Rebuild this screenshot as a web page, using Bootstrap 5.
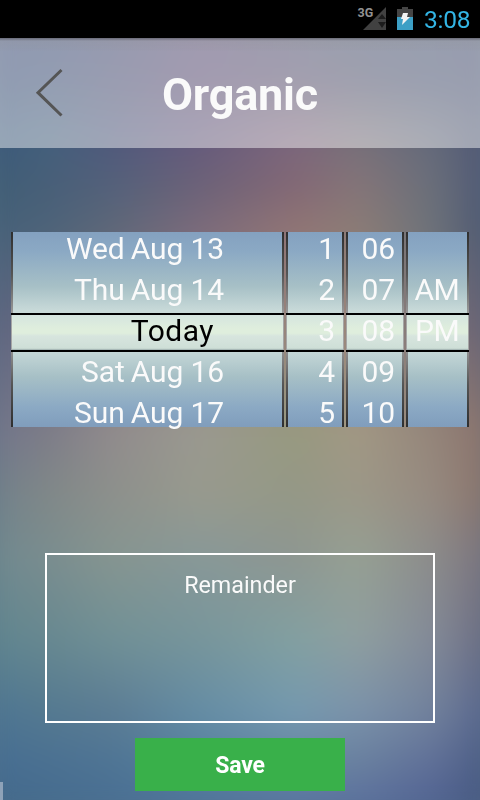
<!DOCTYPE html>
<html lang="en">
<head>
<meta charset="utf-8">
<meta name="viewport" content="width=device-width, initial-scale=1">
<title>Organic</title>
<link href="https://cdn.jsdelivr.net/npm/bootstrap@5.3.0/dist/css/bootstrap.min.css" rel="stylesheet">
<style>
body{font-family:Roboto,sans-serif;background:#557088;width:480px;height:800px;color:#fafafa}
.backdrop{z-index:-1;filter:blur(13px);transform:scale(1.07,1.04)}
.statusbar{height:38px;padding-right:10px}
.clock{font-size:24.500px;line-height:38px;color:#33b5e5;width:46px;letter-spacing:-.2px;padding-top:1px}
.titlebar{height:110px;background:linear-gradient(rgba(90,90,100,.75),rgba(145,145,150,.25) 3px,rgba(145,145,150,.1) 12px,transparent 13px),rgba(255,255,255,.45)}
.titlebar h1{font-size:45px;line-height:50px;letter-spacing:-.2px;padding-top:4px}
.wheels{margin:84px 11px 0;height:195px;gap:2px}
.wheel{height:195px;border:2px solid;border-width:0 2px;border-image:linear-gradient(#2e2e2e,#555 22%,#b5b5b5 50%,#555 78%,#2e2e2e) 1;
background:linear-gradient(#84a1c0,#8ba9c4 10%,#a7c0c6 28%,#c7d9d8 40%,#cfddd6 50%,#c3d6d6 62%,#a7c0c6 74%,#8ba9c4 90%,#809dbc)}
.w-day{width:273px}.w-hour,.w-min{width:58px}.w-half{width:63px}
.wheel-row{height:41px;line-height:41px;font-size:30px;letter-spacing:-.1px;white-space:pre}
.wheel-rows{margin-top:-4px;z-index:1}
.w-day .wheel-row{padding-right:58px}
.weekday{margin-right:6px}
.w-day .today{color:#000;padding-right:68px;letter-spacing:.5px}
.w-hour .wheel-row,.w-min .wheel-row{padding-right:7px}
.w-half .wheel-row{padding-right:8px;letter-spacing:-.6px}
.band{left:0;right:0;top:81px;height:39px;margin:0 -2px;border:solid #000;border-width:2px 0;
background:linear-gradient(#d5e5df,#dfeedd 40%,#dfeedd 52%,#d7e5de 60%,#cedfd7 95%,#9aa 100%);box-shadow:inset 1px 0 #a5a5a5,inset -1px 0 #a5a5a5}
.note{margin:126px 45px 0;height:170px;border:2px solid #fff;font-size:23.300px;padding-top:13px;line-height:34px}
.btn-save{margin-top:15px;width:210px;height:53px;background:#39b04a!important;color:#fff!important;font-size:23px;font-weight:700;border:0;border-radius:0;letter-spacing:-.2px;padding-top:9px}
.sliver{left:0;bottom:0;width:3px;height:18px;background:#8ea2b8}
.back-arrow{left:34px;top:30px}
</style>
</head>
<body class="position-relative overflow-hidden">
<canvas id="backdrop" class="backdrop position-absolute top-0 start-0" width="480" height="800"></canvas>
<div class="statusbar bg-black d-flex justify-content-end align-items-center">
  <svg width="30" height="38" viewBox="0 0 30 38" style="margin-right:10px"><path d="M29 7v23H6z" fill="#414141"/><path d="M21 19l4-5 4 5zM21 22h8l-4 6z" fill="#1c1c1c"/><text x="0.500" y="17" font-family="Roboto,sans-serif" font-size="12.500" font-weight="700" fill="#929292" stroke="#000" stroke-width="1" paint-order="stroke">3G</text></svg>
  <svg width="18" height="38" viewBox="0 0 18 38" style="margin-right:9px"><path d="M5 7h6v2H5zM0 9h16v9H0z" fill="#454545"/><path d="M0 17h16v13H0z" fill="#3c9fc5"/><path d="M6 13h5l-1 4h3l-8 8 1-6H4z" fill="#f4f4f4"/></svg>
  <span class="clock">3:08</span>
</div>
<header class="titlebar d-flex align-items-center position-relative">
  <svg width="30" height="50" viewBox="0 0 30 50" class="back-arrow position-absolute" fill="none" stroke="#555" stroke-width="3"><path d="M27.500 2L4 24.700l23.500 22.800"/></svg>
  <h1 class="w-100 text-center fw-bold mb-0">Organic</h1>
</header>
<main>
  <section class="wheels d-flex">
    <div class="wheel w-day position-relative"><div class="band position-absolute"></div>
      <div class="wheel-rows position-relative text-end">
        <div class="wheel-row"><span class="weekday">Wed</span>Aug 13</div>
        <div class="wheel-row"><span class="weekday">Thu</span>Aug 14</div>
        <div class="wheel-row today">Today</div>
        <div class="wheel-row"><span class="weekday">Sat</span>Aug 16</div>
        <div class="wheel-row"><span class="weekday">Sun</span>Aug 17</div>
      </div></div>
    <div class="wheel w-hour position-relative"><div class="band position-absolute"></div>
      <div class="wheel-rows position-relative text-end">
        <div class="wheel-row">1</div><div class="wheel-row">2</div><div class="wheel-row">3</div><div class="wheel-row">4</div><div class="wheel-row">5</div>
      </div></div>
    <div class="wheel w-min position-relative"><div class="band position-absolute"></div>
      <div class="wheel-rows position-relative text-end">
        <div class="wheel-row">06</div><div class="wheel-row">07</div><div class="wheel-row">08</div><div class="wheel-row">09</div><div class="wheel-row">10</div>
      </div></div>
    <div class="wheel w-half position-relative"><div class="band position-absolute"></div>
      <div class="wheel-rows position-relative text-end">
        <div class="wheel-row"> </div><div class="wheel-row">AM</div><div class="wheel-row">PM</div>
      </div></div>
  </section>
  <div class="note text-center">Remainder</div>
  <div class="text-center"><button type="button" class="btn btn-success btn-save">Save</button></div>
</main>
<div class="sliver position-absolute"></div>
<script src="https://cdn.jsdelivr.net/npm/bootstrap@5.3.0/dist/js/bootstrap.bundle.min.js"></script>
<script>
// Blend a coarse grid of colours into a soft full-page backdrop.
const xs=[0,60,120,200,290,350,420,480];
const rows=[
 [38,'374673 364571 40466f 534870 4c4f6e 47526e 435070 414a6a'],
 [90,'354972 3a4d73 464c70 57496f 574f6c 4f516b 46506e 454c6c'],
 [148,'3b587a 43607c 50597c 655a7c 7c667c 77707a 646a7b 4d5573'],
 [195,'3f5e75 485f78 54617a 6c6278 836875 857578 6a6f7a 4b5573'],
 [232,'456078 4c6379 5d6779 7a6a7b 907475 8b7c76 6c727a 495470'],
 [330,'5c6580 6b6a80 80727f 907e80 98857b 9a867b 7d7478 665f73'],
 [428,'70748a 7d7c88 918b8c 9a9990 97997f a29884 94857a 896f69'],
 [490,'6f7f8b 808888 8d908c 989a8e 949886 9c9888 968a80 877068'],
 [550,'6f888e 7a8d8f 869590 889898 8e9691 96a093 8c8c8b 776e7a'],
 [630,'5f858f 678890 709096 77959b 82a0a1 8f9fa0 838a98 66677e'],
 [700,'4d7592 547990 5b7c94 648ca4 7499af 7b92aa 71819c 54618a'],
 [750,'466d91 4a7092 4e7494 55809f 6684a3 69809f 5f6f98 485a80'],
 [800,'426788 456b8c 486d92 4e7198 5572a0 586c9d 4e6090 43557c']
].map(([y,s])=>[y,s.split(' ').map(c=>[0,2,4].map(i=>parseInt(c.substr(i,2),16)))]);
const ctx=document.getElementById('backdrop').getContext('2d');
const img=ctx.createImageData(480,800);
for(let y=0;y<800;y++){
  let j=0;while(j<rows.length-2&&y>rows[j+1][0])j++;
  const v=Math.max(0,Math.min(1,(y-rows[j][0])/(rows[j+1][0]-rows[j][0])));
  for(let x=0;x<480;x++){
    let i=0;while(i<xs.length-2&&x>xs[i+1])i++;
    const u=(x-xs[i])/(xs[i+1]-xs[i]),p=(y*480+x)*4,a=rows[j][1],b=rows[j+1][1];
    for(let k=0;k<3;k++)img.data[p+k]=(a[i][k]*(1-u)+a[i+1][k]*u)*(1-v)+(b[i][k]*(1-u)+b[i+1][k]*u)*v;
    img.data[p+3]=255;
  }
}
ctx.putImageData(img,0,0);
</script>
</body>
</html>
